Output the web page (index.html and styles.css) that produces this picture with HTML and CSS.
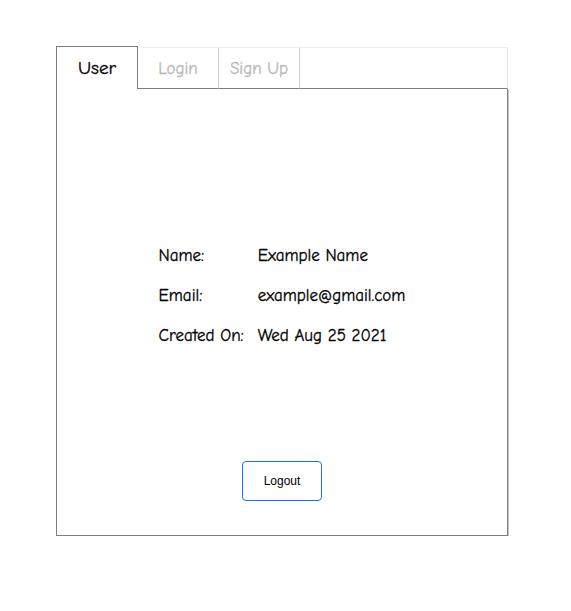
FILE: index.html
```html
<!DOCTYPE html>
<html>
<head>
<meta charset="utf-8">
<link rel="stylesheet" href="styles.css">
</head>
<body>
<div class="card">
  <div class="tabs">
    <div class="tab tab-active">User</div>
    <div class="tab">Login</div>
    <div class="tab">Sign Up</div>
    <div class="tab-fill"></div>
  </div>
  <div class="panel">
    <div class="info">
      <div class="label">Name:</div><div class="value">Example Name</div>
      <div class="label">Email:</div><div class="value">example@gmail.com</div>
      <div class="label">Created On:</div><div class="value">Wed Aug 25 2021</div>
    </div>
    <button class="logout">Logout</button>
  </div>
</div>
</body>
</html>
```
FILE: styles.css
```css
html, body {
  margin: 0;
  padding: 0;
  background: #fff;
}
body {
  padding: 46px 0 0 56px;
  font-family: "Comic Sans MS", "Comic Neue", "Lato", sans-serif;
}
.card {
  width: 452px;
}
.tabs {
  display: flex;
  align-items: flex-end;
  height: 43px;
}
.tab {
  box-sizing: border-box;
  width: 81px;
  height: 42px;
  border-top: 1px solid #f0f0f0;
  border-right: 1px solid #cfcfcf;
  border-bottom: 1px solid #7d7d7d;
  display: flex;
  align-items: center;
  justify-content: center;
  font-size: 17px;
  color: #b8b8b8;
  -webkit-text-stroke: 0.3px #b8b8b8;
  padding-top: 0;
}
.tab-active {
  width: 82px;
  height: 43px;
  border: 1px solid #7d7d7d;
  border-bottom: none;
  font-size: 19px;
  color: #000;
  -webkit-text-stroke: 0.3px #000;
  padding-top: 0;
}
.tab-fill {
  flex: 1;
  box-sizing: border-box;
  height: 42px;
  border-top: 1px solid #f0f0f0;
  border-right: 1px solid #e2e2e2;
  border-bottom: 1px solid #7d7d7d;
}
.panel {
  box-sizing: border-box;
  height: 447px;
  border: 1px solid #7d7d7d;
  border-top: none;
  box-shadow: 1px 1px 0 #c8c8c8;
  display: flex;
  flex-direction: column;
  align-items: center;
  padding-top: 156px;
}
.info {
  display: grid;
  grid-template-columns: auto auto;
  column-gap: 14px;
  row-gap: 18px;
  font-size: 17px;
  line-height: 22px;
  color: #000;
  -webkit-text-stroke: 0.3px #000;
}
.logout {
  margin-top: 114px;
  width: 80px;
  height: 40px;
  background: #fff;
  border: 1px solid #1a73e8;
  border-radius: 4px;
  font-family: "Liberation Sans", Arial, sans-serif;
  font-size: 12px;
  color: #000;
  padding: 0;
}
```
